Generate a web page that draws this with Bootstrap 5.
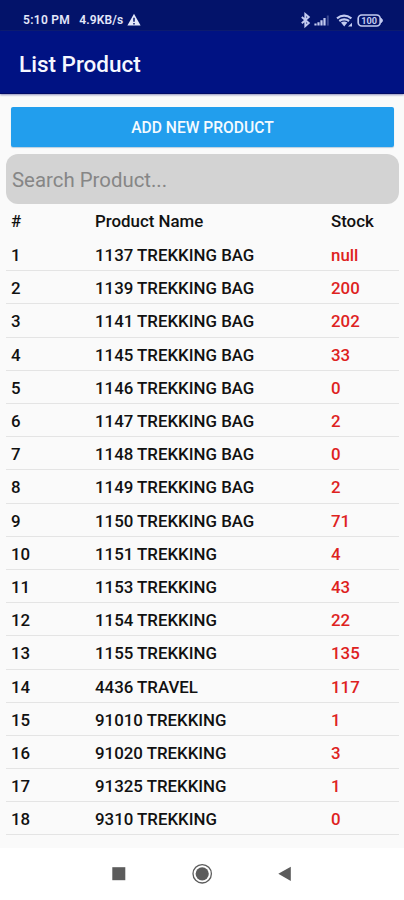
<!DOCTYPE html>
<html lang="en">
<head>
<meta charset="utf-8">
<meta name="viewport" content="width=device-width, initial-scale=1">
<title>List Product</title>
<link href="https://cdn.jsdelivr.net/npm/bootstrap@5.3.0/dist/css/bootstrap.min.css" rel="stylesheet">
<style>
body{font-family:Roboto,"Liberation Sans",sans-serif;background:#fafafa;color:#111;height:900px;overflow:hidden}
.status{height:31px;background:#03136a;color:#e4e8fa;font-size:12px;font-weight:600;padding:9px 20px 0 23px;line-height:22px}
.status .clock{letter-spacing:.3px;margin-right:-3px}
.status .speed{letter-spacing:.15px}
.status svg{display:block}
.appbar{height:63px;background:#001283;color:#f6f7ff;padding-left:19px;padding-top:5px;border-bottom:1px solid #000a66;box-shadow:0 1px 2px #8d8fbb}
.appbar h1{font-size:22.5px;font-weight:500}
.main{height:754px;overflow:hidden;padding:13px 5px 0 6px}
.btn-add{height:40px;margin:0 5px;background:#229eed;color:#f4faff;font-size:15.6px;font-weight:500;border-radius:2px;padding:3px 0 0;border:0;box-shadow:0 1px 1px #b9cfdf}
.search,.search:focus{height:50px;margin-top:7px;border:0;border-radius:12px;background:#d3d3d3;font-size:20.4px;padding:2px 6px 0;color:#555}
.search::placeholder{color:#868686;opacity:1}
.item{height:33.2px;font-size:16.85px;font-weight:500;line-height:34px;border-bottom:1px solid #e4e4e4;padding-left:5px}
.item.head{height:34.1px;border-color:transparent}
.c-no{width:84px}
.c-stock{width:68px;color:#de221e}
.head .c-stock{color:#111}
.navkeys{height:52px;background:#fff}
</style>
<script src="https://cdn.jsdelivr.net/npm/bootstrap@5.3.0/dist/js/bootstrap.bundle.min.js"></script>
</head>
<body class="d-flex flex-column">
<div class="status d-flex flex-shrink-0 justify-content-between">
  <div class="d-flex"><span class="clock">5:10 PM</span><span class="ms-2 ps-1 speed">4.9KB/s</span>
    <svg class="ms-1 mt-1" width="14" height="14" viewBox="0 0 14 14"><path d="M7 .8 13.6 12.6H.4Z" fill="#e4e8fa"/><path d="M7 4.8v4M7 9.9v1.5" stroke="#03136a" stroke-width="1.5"/></svg></div>
  <svg width="84" height="22" viewBox="300 9 84 22" fill="none" stroke="#c3cbf0">
    <path d="M301.8 17l7 6-3.5 3.2V14l3.5 3-7 6.2" stroke-width="1.9"/>
    <path d="M315.5 25.6v-2M318.5 25.6v-3.4M321.5 25.6v-5.4M324.5 25.6v-7.6" stroke-width="2.2"/>
    <path d="M327.8 25.6V15.5" stroke="#3a4892" stroke-width="2"/>
    <path d="M337 18.4q7-5.4 14.4 0M339.3 21q4.9-3.4 9.8 0" stroke-width="2.2"/>
    <path d="M341 22.5q3-2 6.4 0L344.2 26.6Z" fill="#c3cbf0" stroke="none"/><path d="M352 22.8v3.6h-4z" fill="#c3cbf0" stroke="none"/>
    <rect x="358.2" y="15" width="22" height="11" rx="3.6" stroke-width="1.7"/>
    <path d="M381.5 18.5q2 2 0 4z" fill="#c3cbf0"/>
    <text x="369.2" y="23.8" text-anchor="middle" font-size="9.2" font-weight="700" fill="#c3cbf0" stroke="none">100</text>
  </svg>
</div>
<header class="appbar d-flex flex-shrink-0 align-items-center"><h1 class="m-0">List Product</h1></header>
<main class="main d-flex flex-column flex-shrink-0">
  <button class="btn btn-add flex-shrink-0">ADD NEW PRODUCT</button>
  <input class="form-control search flex-shrink-0" placeholder="Search Product...">
  <div class="list">
    <div class="item head d-flex"><div class="c-no">#</div><div class="flex-grow-1">Product Name</div><div class="c-stock">Stock</div></div>
    <div class="item d-flex"><div class="c-no">1</div><div class="flex-grow-1">1137 TREKKING BAG</div><div class="c-stock">null</div></div>
    <div class="item d-flex"><div class="c-no">2</div><div class="flex-grow-1">1139 TREKKING BAG</div><div class="c-stock">200</div></div>
    <div class="item d-flex"><div class="c-no">3</div><div class="flex-grow-1">1141 TREKKING BAG</div><div class="c-stock">202</div></div>
    <div class="item d-flex"><div class="c-no">4</div><div class="flex-grow-1">1145 TREKKING BAG</div><div class="c-stock">33</div></div>
    <div class="item d-flex"><div class="c-no">5</div><div class="flex-grow-1">1146 TREKKING BAG</div><div class="c-stock">0</div></div>
    <div class="item d-flex"><div class="c-no">6</div><div class="flex-grow-1">1147 TREKKING BAG</div><div class="c-stock">2</div></div>
    <div class="item d-flex"><div class="c-no">7</div><div class="flex-grow-1">1148 TREKKING BAG</div><div class="c-stock">0</div></div>
    <div class="item d-flex"><div class="c-no">8</div><div class="flex-grow-1">1149 TREKKING BAG</div><div class="c-stock">2</div></div>
    <div class="item d-flex"><div class="c-no">9</div><div class="flex-grow-1">1150 TREKKING BAG</div><div class="c-stock">71</div></div>
    <div class="item d-flex"><div class="c-no">10</div><div class="flex-grow-1">1151 TREKKING</div><div class="c-stock">4</div></div>
    <div class="item d-flex"><div class="c-no">11</div><div class="flex-grow-1">1153 TREKKING</div><div class="c-stock">43</div></div>
    <div class="item d-flex"><div class="c-no">12</div><div class="flex-grow-1">1154 TREKKING</div><div class="c-stock">22</div></div>
    <div class="item d-flex"><div class="c-no">13</div><div class="flex-grow-1">1155 TREKKING</div><div class="c-stock">135</div></div>
    <div class="item d-flex"><div class="c-no">14</div><div class="flex-grow-1">4436 TRAVEL</div><div class="c-stock">117</div></div>
    <div class="item d-flex"><div class="c-no">15</div><div class="flex-grow-1">91010 TREKKING</div><div class="c-stock">1</div></div>
    <div class="item d-flex"><div class="c-no">16</div><div class="flex-grow-1">91020 TREKKING</div><div class="c-stock">3</div></div>
    <div class="item d-flex"><div class="c-no">17</div><div class="flex-grow-1">91325 TREKKING</div><div class="c-stock">1</div></div>
    <div class="item d-flex"><div class="c-no">18</div><div class="flex-grow-1">9310 TREKKING</div><div class="c-stock">0</div></div>
  </div>
</main>
<nav class="navkeys flex-shrink-0">
  <svg class="d-block" width="404" height="52" viewBox="0 848 404 52" fill="#5c5c5c">
    <rect x="112.3" y="867.2" width="13" height="13"/>
    <circle cx="202.2" cy="873.8" r="6.6"/><circle cx="202.2" cy="873.8" r="9.2" fill="none" stroke="#5c5c5c" stroke-width="1.3"/>
    <path d="M278.3 873.8 290.8 866.8V881Z"/>
  </svg>
</nav>
</body>
</html>
